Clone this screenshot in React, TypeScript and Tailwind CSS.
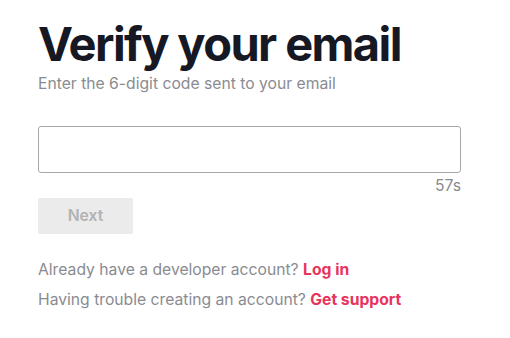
export default function App() {
  return (
    <div
      className="min-h-screen bg-white pl-[38px] pt-[15px]"
      style={{ fontFamily: 'Inter, "Noto Sans", sans-serif' }}
    >
      <div className="w-[423px]">
        <h1 className="text-[47px] font-bold leading-[58px] tracking-[-1.6px] text-[#161823]">
          Verify your email
        </h1>
        <p className="mt-[1px] text-[15.7px] leading-[20px] text-[#8a8b91]">
          Enter the 6-digit code sent to your email
        </p>

        <input
          type="text"
          className="mt-[32px] block h-[47px] w-full rounded-[3px] border border-[#a7a7ab] bg-white px-3 text-[16px] outline-none"
        />
        <div className="mt-[3px] text-right text-[15.7px] leading-[20px] text-[#8a8b91]">57s</div>

        <button
          disabled
          className="mt-[2px] h-[36px] w-[95px] rounded-[2px] bg-[#ebebeb] text-[15.7px] font-semibold text-[#b2b2b5]"
        >
          Next
        </button>

        <div className="mt-[26px] flex flex-col gap-[10px] text-[15.7px] leading-[20px] text-[#8a8b91]">
          <p>
            Already have a developer account?{' '}
            <a href="#" className="font-bold text-[#e8345c]">
              Log in
            </a>
          </p>
          <p>
            Having trouble creating an account?{' '}
            <a href="#" className="font-bold text-[#e8345c]">
              Get support
            </a>
          </p>
        </div>
      </div>
    </div>
  )
}
